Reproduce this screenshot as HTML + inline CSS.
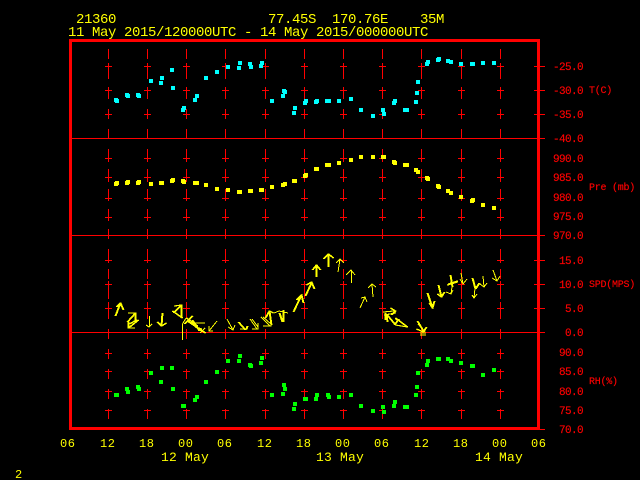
<!DOCTYPE html>
<html><head><meta charset="utf-8"><title>21360</title>
<style>
html,body{margin:0;padding:0;background:#000;width:640px;height:480px;overflow:hidden}
svg{display:block}
text{font-family:"Liberation Mono",monospace}
.t{fill:#ff0;font-size:14px;letter-spacing:-.4px}
.a{fill:#ff0;font-size:12px;letter-spacing:.5px}
.d{fill:#ff0;font-size:13px;letter-spacing:.2px}
.r{fill:#f00;stroke:#f00;stroke-width:.15px;font-size:11px;letter-spacing:-.6px;text-anchor:end}
.n{fill:#f00;stroke:#f00;stroke-width:.15px;font-size:10px;letter-spacing:-.25px}
</style></head><body>
<svg width="640" height="480" viewBox="0 0 640 480" xmlns="http://www.w3.org/2000/svg">
<rect width="640" height="480" fill="#000"/>
<defs>
<path id="col" d="M.5,49V59M.5,63V79M.5,87V99M.5,109V119M.5,129V138M.5,149V162M.5,169V182M.5,189V201M.5,209V221M.5,229V239M.5,249V263M.5,269V279M.5,281V289M.5,289V299M.5,302V319M.5,329V339M.5,349V359M.5,369V379M.5,389V399M.5,409V419M-3,66.5H4M-3,90.5H4M-3,114.5H4M-3,158.5H4M-3,177.5H4M-3,198.5H4M-3,217.5H4M-3,260.5H4M-3,284.5H4M-3,308.5H4M-3,353.5H4M-3,371.5H4M-3,391.5H4M-3,410.5H4"/>
<g id="dbl">
<path d="M115,316L120,303M116,307L120,303L123,310"/>
<path d="M127,322L135,313M128,313H135V321"/>
<path d="M128,328L138,320M128,322V328H134M129,324L136,320"/>
<path d="M162,313L161,326M157,322L161,326L166,323"/>
<path d="M174,306L181,305V318M172,311L182,318M173,313L181,305"/>
<path d="M186,318L197,326M184,324L192,316M192,320L199,331M195,327L201,329M187,321L205,333"/>
<path d="M238,322L245,330M240,329H246L247,326"/>
<path d="M271,325L269,311M265,318L269,311L273,313"/>
<path d="M283,310V322M279,313L282,322"/>
<path d="M293,312L301,295M296,300L301,295L303,303"/>
<path d="M305,296L311,283M306,285L311,282L314,289"/>
<path d="M316,277V265M312,270L316,265L320,270"/>
<path d="M328,267V254M323,259L328,254L333,258"/>
<path d="M383,312L393,311M384,315L395,313M390,308L395,311L391,315"/>
<path d="M385,320V313M386,314L395,325M387,322L386,314"/>
<path d="M395,318L407,327M395,325L407,327M395,319L399,320M395,324L398,319"/>
<path d="M417,321L423,331M416,329L423,332M426,327L423,332M420,333H425M420,335H425"/>
<path d="M427,293L432,308M429,303L432,308L434,301"/>
<path d="M438,285L441,297M437,294L441,297L444,292"/>
<path d="M450,275L452,287M447,285L457,282M448,284L457,281"/>
<path d="M472,278L475,289M475,289L479,283"/>
</g>
</defs>
<g stroke="#f00" stroke-width="1" fill="none" shape-rendering="crispEdges">
<use href="#col" x="108"/><use href="#col" x="147"/><use href="#col" x="186"/><use href="#col" x="225"/><use href="#col" x="265"/><use href="#col" x="304"/><use href="#col" x="343"/><use href="#col" x="382"/><use href="#col" x="421"/><use href="#col" x="461"/><use href="#col" x="500"/>
<path d="M72,138.5H545M72,235.5H545M72,332.5H545M530,429.5H545M534,66.5H545M534,90.5H545M534,114.5H545M534,260.5H545M534,284.5H545M534,308.5H545"/>
</g>
<rect x="70.500" y="40.500" width="468" height="388" fill="none" stroke="#f00" stroke-width="3" shape-rendering="crispEdges"/>

<path fill="none" stroke="#0ff" stroke-width="4" shape-rendering="crispEdges" d="M114,100h4M115,101h4M125,95h4M126,96h4M136,95h4M137,96h4M149,81h4M159,83h4M160,78h4M170,70h4M171,88h4M181,110h4M182,108h4M193,100h4M195,96h4M204,78h4M215,72h4M226,67h4M237,68h4M238,63h4M248,64h4M249,67h4M259,66h4M260,63h4M270,101h4M281,96h4M282,91h4M283,92h4M292,113h4M293,108h4M303,103h4M304,101h4M314,102h4M315,101h4M325,101h4M327,101h4M337,101h4M349,99h4M359,110h4M371,116h4M381,110h4M382,114h4M392,103h4M393,101h4M403,110h4M405,110h4M414,102h4M415,93h4M416,82h4M425,64h4M426,62h4M436,60h4M437,59h4M446,61h4M449,62h4M459,64h4M470,64h4M471,64h4M481,63h4M492,63h4"/>
<path fill="none" stroke="#ff0" stroke-width="4" shape-rendering="crispEdges" d="M114,184h4M115,183h4M125,183h4M126,182h4M136,183h4M137,182h4M149,184h4M159,183h4M160,183h4M170,181h4M171,180h4M181,181h4M182,182h4M193,183h4M195,183h4M204,185h4M215,189h4M226,190h4M237,192h4M238,192h4M248,191h4M249,191h4M259,190h4M260,190h4M270,187h4M281,185h4M283,184h4M292,181h4M293,181h4M303,176h4M304,175h4M314,169h4M315,169h4M325,165h4M327,165h4M337,163h4M349,160h4M359,157h4M371,157h4M381,157h4M382,157h4M392,162h4M393,163h4M403,165h4M405,165h4M414,170h4M416,172h4M425,178h4M426,179h4M436,186h4M437,187h4M446,191h4M449,193h4M459,197h4M470,201h4M471,200h4M481,205h4M492,208h4"/>
<path fill="none" stroke="#0f0" stroke-width="4" shape-rendering="crispEdges" d="M114,395h4M115,395h4M125,389h4M126,392h4M136,387h4M137,389h4M149,373h4M159,382h4M160,368h4M170,368h4M171,389h4M181,406h4M182,406h4M193,400h4M195,397h4M204,382h4M215,372h4M226,361h4M237,361h4M238,356h4M248,365h4M249,366h4M259,363h4M260,358h4M270,395h4M281,394h4M282,385h4M283,389h4M292,409h4M293,404h4M303,399h4M304,399h4M314,399h4M315,395h4M326,395h4M327,397h4M337,397h4M349,395h4M359,406h4M371,411h4M381,407h4M382,412h4M392,406h4M393,402h4M403,407h4M405,407h4M414,395h4M415,387h4M416,373h4M425,365h4M426,361h4M436,359h4M437,359h4M446,359h4M449,361h4M459,363h4M470,366h4M471,366h4M481,375h4M492,370h4"/>

<g fill="none" stroke="#ff0" stroke-width="1" shape-rendering="crispEdges">
<use href="#dbl"/>
<use href="#dbl" x="1"/>
<path d="M146,325L149,327L152,324M149.500,316V327"/>
<path d="M182.500,340V324L186,318M195,323H205M200,333L205,328"/>
<path d="M217,321L209,331M209,326V331H213"/>
<path d="M227,319L233,330M228,327L233,330L235,325"/>
<path d="M250,319L257,329M252,319L258,327M252,329H258V323"/>
<path d="M261,317L270,326M263,317L271,324M263,326H271V320"/>
<path d="M274,313L279,311L288,313"/>
<path d="M338,272L340,259M336,263L340,259L344,263"/>
<path d="M351.500,283V270M346,275L351,270L355,275"/>
<path d="M360,308L365,297M361,298L365,297L367,302"/>
<path d="M373,297L372,284M368,288L372,284L376,287"/>
<path d="M418,324L425,332"/>
<path d="M452,287L451,294M446,292L451,294L453,290"/>
<path d="M461,273L463,284M460,279L463,284L467,279"/>
<path d="M475,288L474,298M472,295L474,298L477,294"/>
<path d="M483,276L484,287M480,284L484,287L487,283"/>
<path d="M493,270L497,281M492,278L497,281L500,276"/>
</g>

<text class="t" x="76" y="23">21360</text>
<text class="t" x="268" y="23">77.45S</text>
<text class="t" x="332" y="23">170.76E</text>
<text class="t" x="420" y="23">35M</text>
<text class="t" x="68" y="36">11 May 2015/120000UTC - 14 May 2015/000000UTC</text>

<text class="r" x="583" y="70">-25.0</text>
<text class="r" x="583" y="94">-30.0</text>
<text class="r" x="583" y="118">-35.0</text>
<text class="r" x="583" y="142">-40.0</text>
<text class="r" x="583" y="162">990.0</text>
<text class="r" x="583" y="181">985.0</text>
<text class="r" x="583" y="201">980.0</text>
<text class="r" x="583" y="220">975.0</text>
<text class="r" x="583" y="239">970.0</text>
<text class="r" x="583" y="264">15.0</text>
<text class="r" x="583" y="288">10.0</text>
<text class="r" x="583" y="312">5.0</text>
<text class="r" x="583" y="336">0.0</text>
<text class="r" x="583" y="356">90.0</text>
<text class="r" x="583" y="375">85.0</text>
<text class="r" x="583" y="395">80.0</text>
<text class="r" x="583" y="414">75.0</text>
<text class="r" x="583" y="433">70.0</text>

<text class="n" x="589" y="93">T(C)</text>
<text class="n" x="589" y="190">Pre (mb)</text>
<text class="n" x="589" y="287">SPD(MPS)</text>
<text class="n" x="589" y="384">RH(%)</text>

<text class="a" x="60" y="447">06</text>
<text class="a" x="100" y="447">12</text>
<text class="a" x="139" y="447">18</text>
<text class="a" x="178" y="447">00</text>
<text class="a" x="217" y="447">06</text>
<text class="a" x="257" y="447">12</text>
<text class="a" x="296" y="447">18</text>
<text class="a" x="335" y="447">00</text>
<text class="a" x="374" y="447">06</text>
<text class="a" x="414" y="447">12</text>
<text class="a" x="453" y="447">18</text>
<text class="a" x="492" y="447">00</text>
<text class="a" x="531" y="447">06</text>

<text class="d" x="161" y="461">12 May</text>
<text class="d" x="316" y="461">13 May</text>
<text class="d" x="475" y="461">14 May</text>
<text class="a" x="15" y="478">2</text>
</svg>
</body></html>
